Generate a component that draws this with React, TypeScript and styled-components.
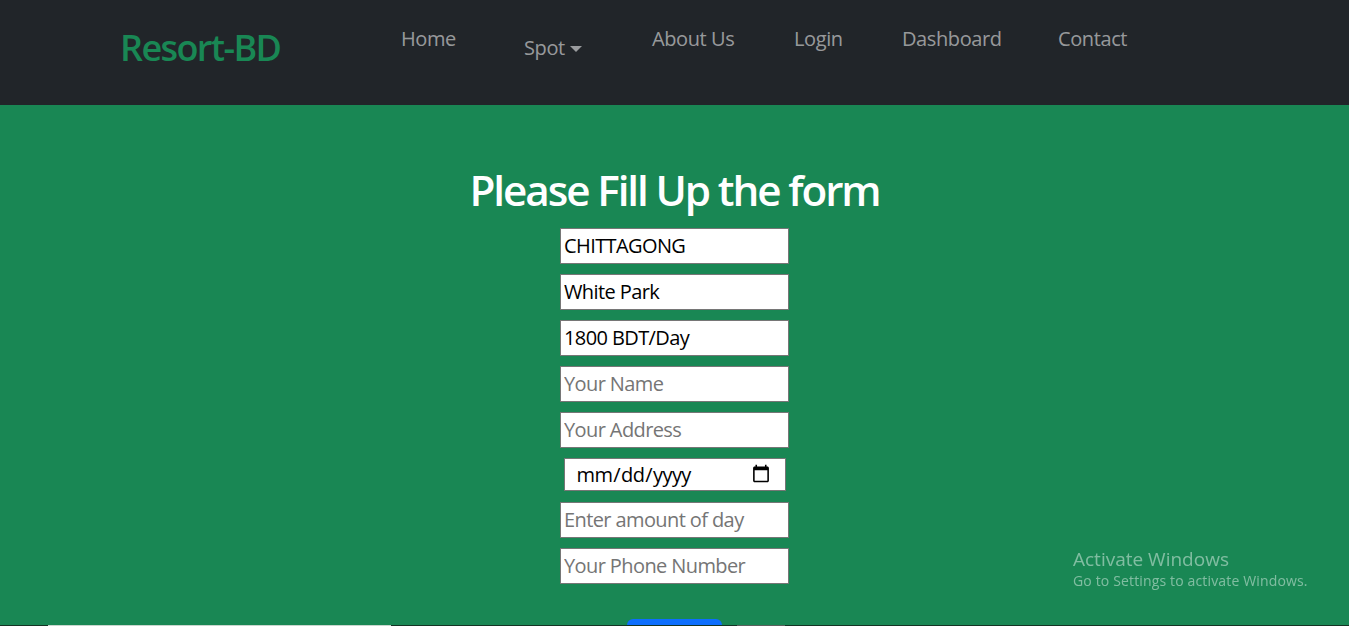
import React from "react";
import styled, { createGlobalStyle } from "styled-components";

const Global = createGlobalStyle`
  html, body { margin: 0; padding: 0; }
  body {
    font-family: "Open Sans", "Noto Sans", sans-serif;
    background: #143324;
    overflow: hidden;
  }
  * { box-sizing: border-box; }
`;

const Navbar = styled.nav`
  height: 105px;
  background: #212529;
  display: flex;
  align-items: flex-start;
  padding-left: 120px;
`;

const Brand = styled.a`
  width: 251px;
  margin-top: 21px;
  font-size: 36px;
  line-height: 54px;
  font-weight: 600;
  color: #198754;
  text-decoration: none;
  white-space: nowrap;
  letter-spacing: -1.6px;
`;

const NavList = styled.ul`
  display: flex;
  list-style: none;
  margin: 0;
  padding: 0;
`;

const NavItem = styled.li<{ $w: number; $pad: number; $top: number }>`
  width: ${(p) => p.$w + p.$pad * 2}px;
  padding: 0 ${(p) => p.$pad}px;
  margin-top: ${(p) => p.$top}px;
  font-size: 20px;
  line-height: 30px;
  color: rgba(255, 255, 255, 0.55);
  white-space: nowrap;
  display: flex;
  align-items: center;
  letter-spacing: -0.4px;
`;

const Caret = styled.span`
  display: inline-block;
  margin-left: 5px;
  margin-top: 2px;
  width: 0;
  height: 0;
  border-left: 6px solid transparent;
  border-right: 6px solid transparent;
  border-top: 6px solid rgba(255, 255, 255, 0.55);
`;

const Section = styled.main`
  height: 520px;
  overflow: hidden;
  background: #198754;
  display: flex;
  flex-direction: column;
  align-items: center;
  padding-top: 60px;
`;

const Title = styled.h1`
  margin: 0 0 12px;
  font-size: 42.24px;
  line-height: 1.2;
  font-weight: 600;
  color: #ffffff;
  letter-spacing: -2.1px;
`;

const Form = styled.form`
  display: flex;
  flex-direction: column;
  align-items: center;
`;

const Field = styled.input`
  width: 229px;
  height: 36px;
  margin-bottom: 10px;
  padding: 0 3px;
  border: 1px solid #767676;
  background: #ffffff;
  color: #000000;
  font-family: "Open Sans", "Noto Sans", sans-serif;
  font-size: 20px;
  letter-spacing: -0.6px;
  outline: none;
  &::placeholder { color: #757575; }
`;

const DateField = styled.input`
  width: 222px;
  height: 33px;
  margin-bottom: 11px;
  padding: 0 14px 0 11px;
  border: 1px solid #767676;
  background: #ffffff;
  color: #000000;
  font-family: "Open Sans", "Noto Sans", sans-serif;
  font-size: 20px;
  letter-spacing: -0.6px;
  outline: none;
  &::-webkit-calendar-picker-indicator {
    width: 20px;
    height: 20px;
    padding: 0;
    margin: 0;
  }
`;

const Submit = styled.button`
  margin-top: 25px;
  width: 95px;
  height: 38px;
  border: none;
  border-radius: 6px;
  background: #0d6efd;
  color: #fff;
  font-size: 16px;
`;

const Footer = styled.footer`
  height: 40px;
  background: #143324;
  display: flex;
  align-items: flex-start;
`;

const Bar = styled.div<{ $left: number; $w: number; $c: string }>`
  margin-left: ${(p) => p.$left}px;
  width: ${(p) => p.$w}px;
  height: 20px;
  background: ${(p) => p.$c};
`;

const Watermark = styled.div`
  position: fixed;
  left: 1073px;
  top: 546px;
  color: rgba(255, 255, 255, 0.45);
  font-family: "Open Sans", "Noto Sans", sans-serif;
  pointer-events: none;
`;

const WmTitle = styled.div`
  font-size: 19px;
  line-height: 26px;
  letter-spacing: 0px;
`;

const WmSub = styled.div`
  font-size: 14px;
  line-height: 18px;
  letter-spacing: 0.15px;
`;

const links = [
  { label: "Home", w: 53, pad: 30, top: 15 },
  { label: "Spot", w: 58, pad: 40, top: 33, caret: true },
  { label: "About Us", w: 82, pad: 30, top: 15 },
  { label: "Login", w: 48, pad: 30, top: 15 },
  { label: "Dashboard", w: 96, pad: 30, top: 15 },
  { label: "Contact", w: 69, pad: 30, top: 15 },
];

export default function App() {
  return (
    <>
      <Global />
      <Navbar>
        <Brand href="#">Resort-BD</Brand>
        <NavList>
          {links.map((l) => (
            <NavItem key={l.label} $w={l.w} $pad={l.pad} $top={l.top}>
              {l.label}
              {l.caret && <Caret />}
            </NavItem>
          ))}
        </NavList>
      </Navbar>
      <Section>
        <Title>Please Fill Up the form</Title>
        <Form onSubmit={(e) => e.preventDefault()}>
          <Field defaultValue="CHITTAGONG" />
          <Field defaultValue="White Park" />
          <Field defaultValue="1800 BDT/Day" />
          <Field placeholder="Your Name" />
          <Field placeholder="Your Address" />
          <DateField type="date" />
          <Field placeholder="Enter amount of day" />
          <Field placeholder="Your Phone Number" />
          <Submit type="submit">Submit</Submit>
        </Form>
      </Section>
      <Footer>
        <Bar $left={48} $w={343} $c="#c9d6ce" />
        <Bar $left={346} $w={48} $c="#5b605d" />
      </Footer>
      <Watermark>
        <WmTitle>Activate Windows</WmTitle>
        <WmSub>Go to Settings to activate Windows.</WmSub>
      </Watermark>
    </>
  );
}
